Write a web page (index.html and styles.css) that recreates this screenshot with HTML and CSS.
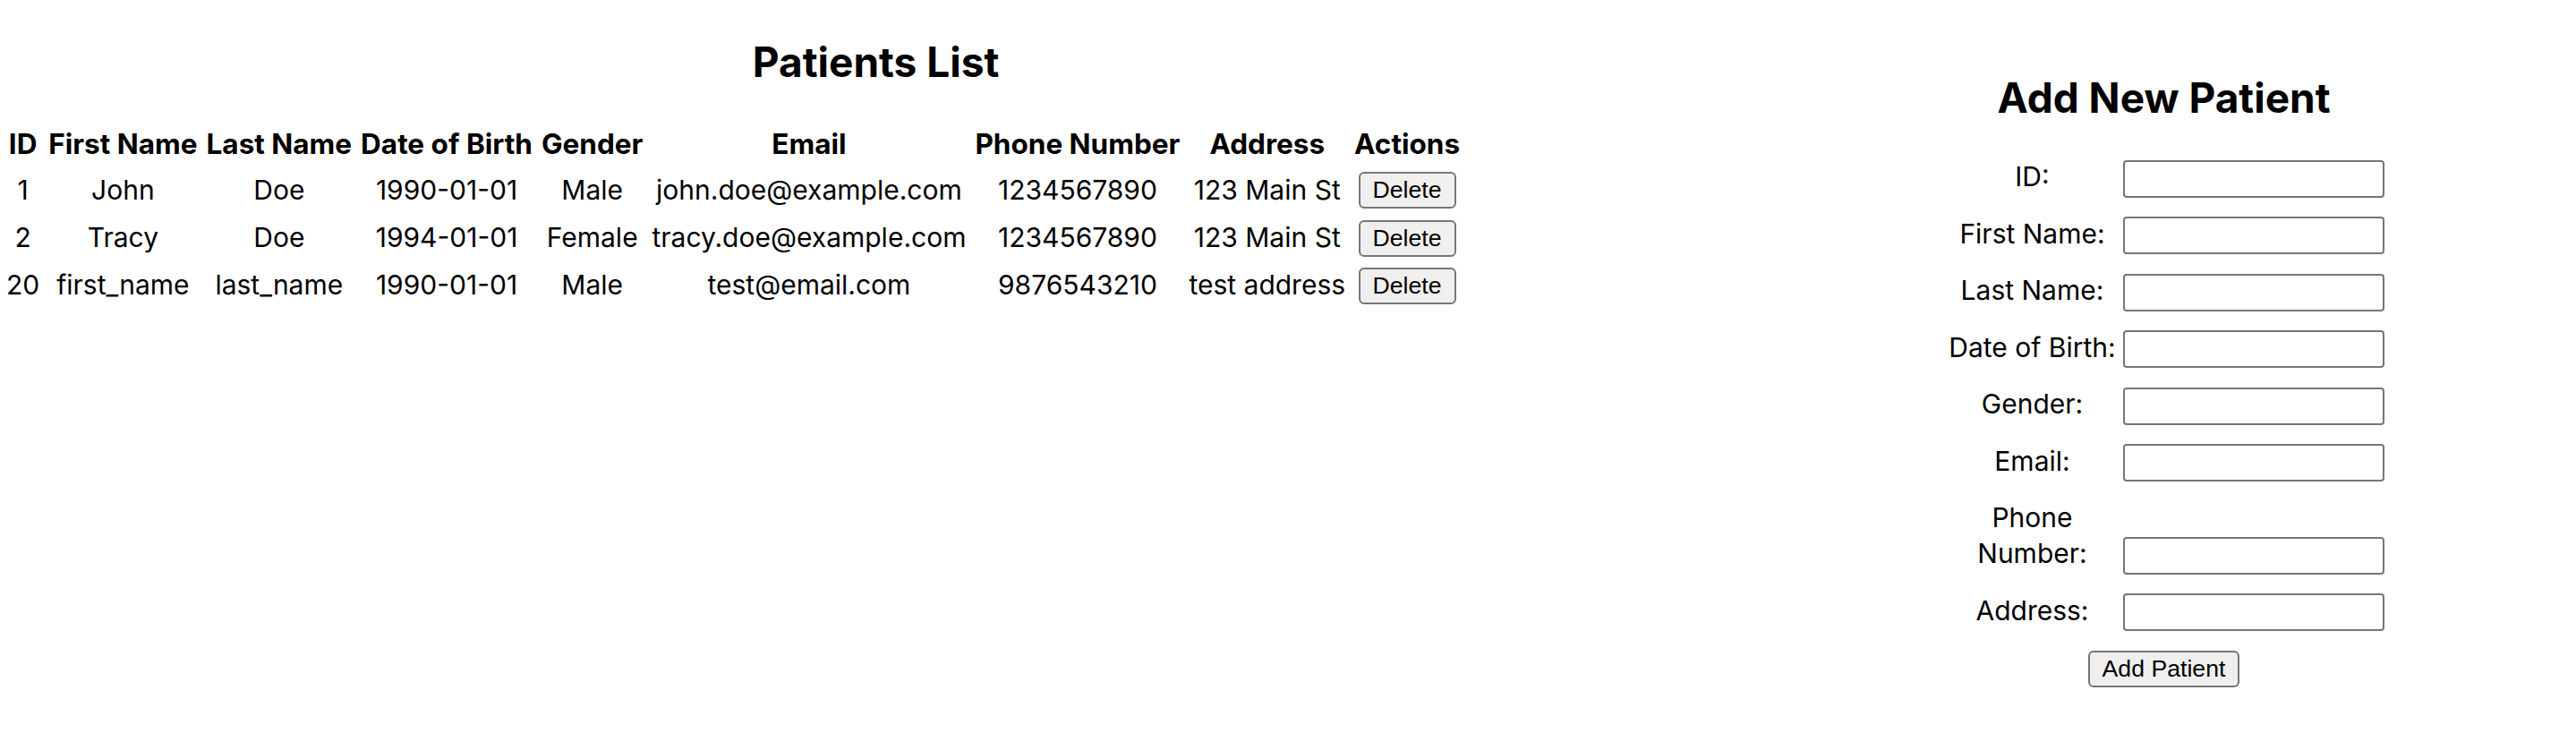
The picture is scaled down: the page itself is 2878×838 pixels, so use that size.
FILE: index.html
```html
<!DOCTYPE html>
<html lang="en">
<head>
<meta charset="utf-8">
<title>Patients</title>
<link rel="stylesheet" href="styles.css">
</head>
<body>
<div class="app">
  <section class="list">
    <h2 class="title">Patients List</h2>
    <table class="patients">
      <thead>
        <tr>
          <th>ID</th><th>First Name</th><th>Last Name</th><th>Date of Birth</th><th>Gender</th><th>Email</th><th>Phone Number</th><th>Address</th><th>Actions</th>
        </tr>
      </thead>
      <tbody>
        <tr>
          <td>1</td><td>John</td><td>Doe</td><td>1990-01-01</td><td>Male</td><td>john.doe@example.com</td><td>1234567890</td><td>123 Main St</td><td><button class="btn" type="button">Delete</button></td>
        </tr>
        <tr>
          <td>2</td><td>Tracy</td><td>Doe</td><td>1994-01-01</td><td>Female</td><td>tracy.doe@example.com</td><td>1234567890</td><td>123 Main St</td><td><button class="btn" type="button">Delete</button></td>
        </tr>
        <tr>
          <td>20</td><td>first_name</td><td>last_name</td><td>1990-01-01</td><td>Male</td><td>test@email.com</td><td>9876543210</td><td>test address</td><td><button class="btn" type="button">Delete</button></td>
        </tr>
      </tbody>
    </table>
  </section>
  <section class="add">
    <h2 class="title">Add New Patient</h2>
    <form class="form">
      <div class="row"><label class="lbl" for="f-id">ID:</label><input class="inp" id="f-id" type="text"></div>
      <div class="row"><label class="lbl" for="f-first">First Name:</label><input class="inp" id="f-first" type="text"></div>
      <div class="row"><label class="lbl" for="f-last">Last Name:</label><input class="inp" id="f-last" type="text"></div>
      <div class="row"><label class="lbl" for="f-dob">Date of Birth:</label><input class="inp" id="f-dob" type="text"></div>
      <div class="row"><label class="lbl" for="f-gender">Gender:</label><input class="inp" id="f-gender" type="text"></div>
      <div class="row"><label class="lbl" for="f-email">Email:</label><input class="inp" id="f-email" type="text"></div>
      <div class="row"><label class="lbl" for="f-phone">Phone Number:</label><input class="inp" id="f-phone" type="text"></div>
      <div class="row"><label class="lbl" for="f-addr">Address:</label><input class="inp" id="f-addr" type="text"></div>
      <div class="actions"><button class="btn" type="submit">Add Patient</button></div>
    </form>
  </section>
</div>
</body>
</html>
```

FILE: styles.css
```css
html, body {
  margin: 0;
  padding: 0;
  background: #ffffff;
}

body {
  font-family: "Inter", "Noto Sans", sans-serif;
  font-size: 30px;
  line-height: 40px;
  color: #000000;
}

.app {
  display: flex;
  align-items: flex-start;
}

.list {
  width: 68%;
}

.add {
  width: 32%;
  padding-top: 40px;
  text-align: center;
}

.title {
  font-size: 46px;
  line-height: 56px;
  font-weight: 700;
  text-align: center;
  margin: 41px 0 40px;
}

.patients {
  border-collapse: separate;
  border-spacing: 4px;
  margin-top: -2px;
}

.patients th,
.patients td {
  padding: 3px;
  text-align: center;
  white-space: nowrap;
}

.patients th {
  font-size: 31.5px;
  font-weight: 700;
  line-height: 38px;
}

.btn {
  font-family: "Liberation Sans", Arial, sans-serif;
  font-size: 26.67px;
  line-height: 30px;
  color: #000000;
  background: #efefef;
  border: 2px solid #767676;
  border-radius: 6px;
  padding: 3px 14px 4px;
  margin: 0;
  vertical-align: middle;
}

.form {
  text-align: center;
}

.row {
  margin-bottom: 20px;
}

.lbl {
  display: inline-block;
  width: 198px;
  text-align: center;
  vertical-align: baseline;
}

.inp {
  display: inline-block;
  box-sizing: border-box;
  width: 292px;
  height: 42px;
  margin: 0 0 0 2px;
  padding: 2px 4px;
  border: 2px solid #767676;
  border-radius: 4px;
  font-family: "Liberation Sans", Arial, sans-serif;
  font-size: 26.67px;
  background: #ffffff;
}

.actions {
  margin-top: 0;
}
```
